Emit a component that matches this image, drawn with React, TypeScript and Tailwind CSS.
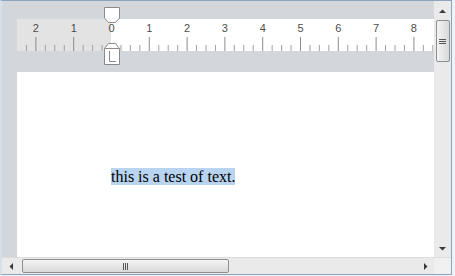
import React from 'react'

const CM = 37.8
const ORIGIN = 94

function Ruler() {
  const ticks: { x: number; major: boolean; n: number }[] = []
  for (let q = -9; q <= 34; q++) {
    const x = ORIGIN + (q / 4) * CM
    if (x < 1 || x > 416) continue
    ticks.push({ x, major: q % 4 === 0, n: Math.abs(q / 4) })
  }
  return (
    <div className="relative flex h-[32px] ml-[15px]">
      <div className="w-[94px] bg-[#e3e3e3]" />
      <div className="flex-1 bg-white" />
      <svg className="absolute left-0 top-0" width="417" height="32">
        {ticks.map((t, i) =>
          t.major ? (
            <g key={i}>
              {t.n !== 0 && <line x1={t.x + 0.5} x2={t.x + 0.5} y1={18} y2={32} stroke="#8c8c8c" />}
              <text
                x={t.x + 0.5}
                y={13}
                textAnchor="middle"
                fontSize="11"
                fill="#4d4d4d"
                fontFamily="'Liberation Sans', Arial, sans-serif"
              >
                {t.n}
              </text>
            </g>
          ) : (
            <line key={i} x1={t.x + 0.5} x2={t.x + 0.5} y1={26} y2={32} stroke="#a0a0a0" />
          )
        )}
      </svg>
      {/* first line indent */}
      <svg className="absolute left-[87px] top-[-12px]" width="17" height="17">
        <path d="M0.5 0.5 H15.5 V11 L11.5 15.5 H4.5 L0.5 11 Z" fill="white" stroke="#8a8a8a" />
      </svg>
      {/* hanging / left indent */}
      <svg className="absolute left-[87px] top-[24px]" width="17" height="23">
        <path d="M4.5 0.5 H11.5 L15.5 5.5 V21.5 H0.5 V5.5 Z" fill="white" stroke="#8a8a8a" />
        <path d="M0.5 5.5 H15.5" stroke="#8a8a8a" />
        <path d="M5.5 8 V18.5 H12" fill="none" stroke="#8a8a8a" />
      </svg>
    </div>
  )
}

function Arrow({ dir }: { dir: 'up' | 'down' | 'left' | 'right' }) {
  const d = {
    up: 'M0 4 L3.5 0.5 L7 4 Z',
    down: 'M0 0 L7 0 L3.5 3.5 Z',
    left: 'M4 0 L4 7 L0.5 3.5 Z',
    right: 'M0 0 L0 7 L3.5 3.5 Z',
  }[dir]
  const w = dir === 'up' || dir === 'down' ? 7 : 4
  const h = dir === 'up' || dir === 'down' ? 4 : 7
  return (
    <svg width={w} height={h}>
      <path d={d} fill="#3a3a3a" />
    </svg>
  )
}

export default function App() {
  return (
    <div className="w-[455px] h-[276px] bg-[#eef3f9] pr-[3px] pb-[1px]">
      <div className="flex h-full flex-col border border-l-2 border-[#8ea3bd] border-l-[#d5e0ec] bg-[#f0f0f0]">
        <div className="flex flex-1 min-h-0">
          {/* document area */}
          <div className="flex flex-1 flex-col bg-[#d3d6da] pt-[18px]">
            <Ruler />
            <div className="mt-[21px] ml-[15px] flex-1 bg-white pl-[94px] pt-[95px] leading-[19px]">
              <span
                className="bg-[#b8d4f1] text-[16px] leading-[19px] text-black"
                style={{ fontFamily: "'Liberation Serif', 'Times New Roman', serif" }}
              >
                this is a test of text.
              </span>
            </div>
          </div>
          {/* vertical scrollbar */}
          <div className="flex w-[17px] flex-col items-center bg-[#eaeaea]">
            <div className="flex h-[17px] items-center justify-center pt-[2px]">
              <Arrow dir="up" />
            </div>
            <div className="mt-[2px] flex h-[42px] w-[14px] flex-col items-center justify-center gap-[1px] rounded-[2px] border border-[#8e8f8f] bg-gradient-to-r from-[#f4f4f4] to-[#d9d9d9]">
              <div className="h-[1px] w-[7px] bg-[#555]" />
              <div className="h-[1px] w-[7px] bg-[#555]" />
              <div className="h-[1px] w-[7px] bg-[#555]" />
            </div>
            <div className="flex-1" />
            <div className="flex h-[17px] items-center justify-center">
              <Arrow dir="down" />
            </div>
          </div>
        </div>
        {/* horizontal scrollbar */}
        <div className="flex h-[17px] border-t border-[#dcdcdc] bg-[#eaeaea]">
          <div className="flex w-[17px] items-center justify-center">
            <Arrow dir="left" />
          </div>
          <div className="my-[1px] ml-[3px] flex w-[207px] items-center justify-center gap-[1px] rounded-[2px] border border-[#8e8f8f] bg-gradient-to-b from-[#f4f4f4] to-[#d9d9d9]">
            <div className="h-[7px] w-[1px] bg-[#555]" />
            <div className="h-[7px] w-[1px] bg-[#555]" />
            <div className="h-[7px] w-[1px] bg-[#555]" />
          </div>
          <div className="flex-1" />
          <div className="flex w-[17px] items-center justify-center">
            <Arrow dir="right" />
          </div>
          <div className="w-[17px] bg-[#f0f0f0]" />
        </div>
      </div>
    </div>
  )
}
